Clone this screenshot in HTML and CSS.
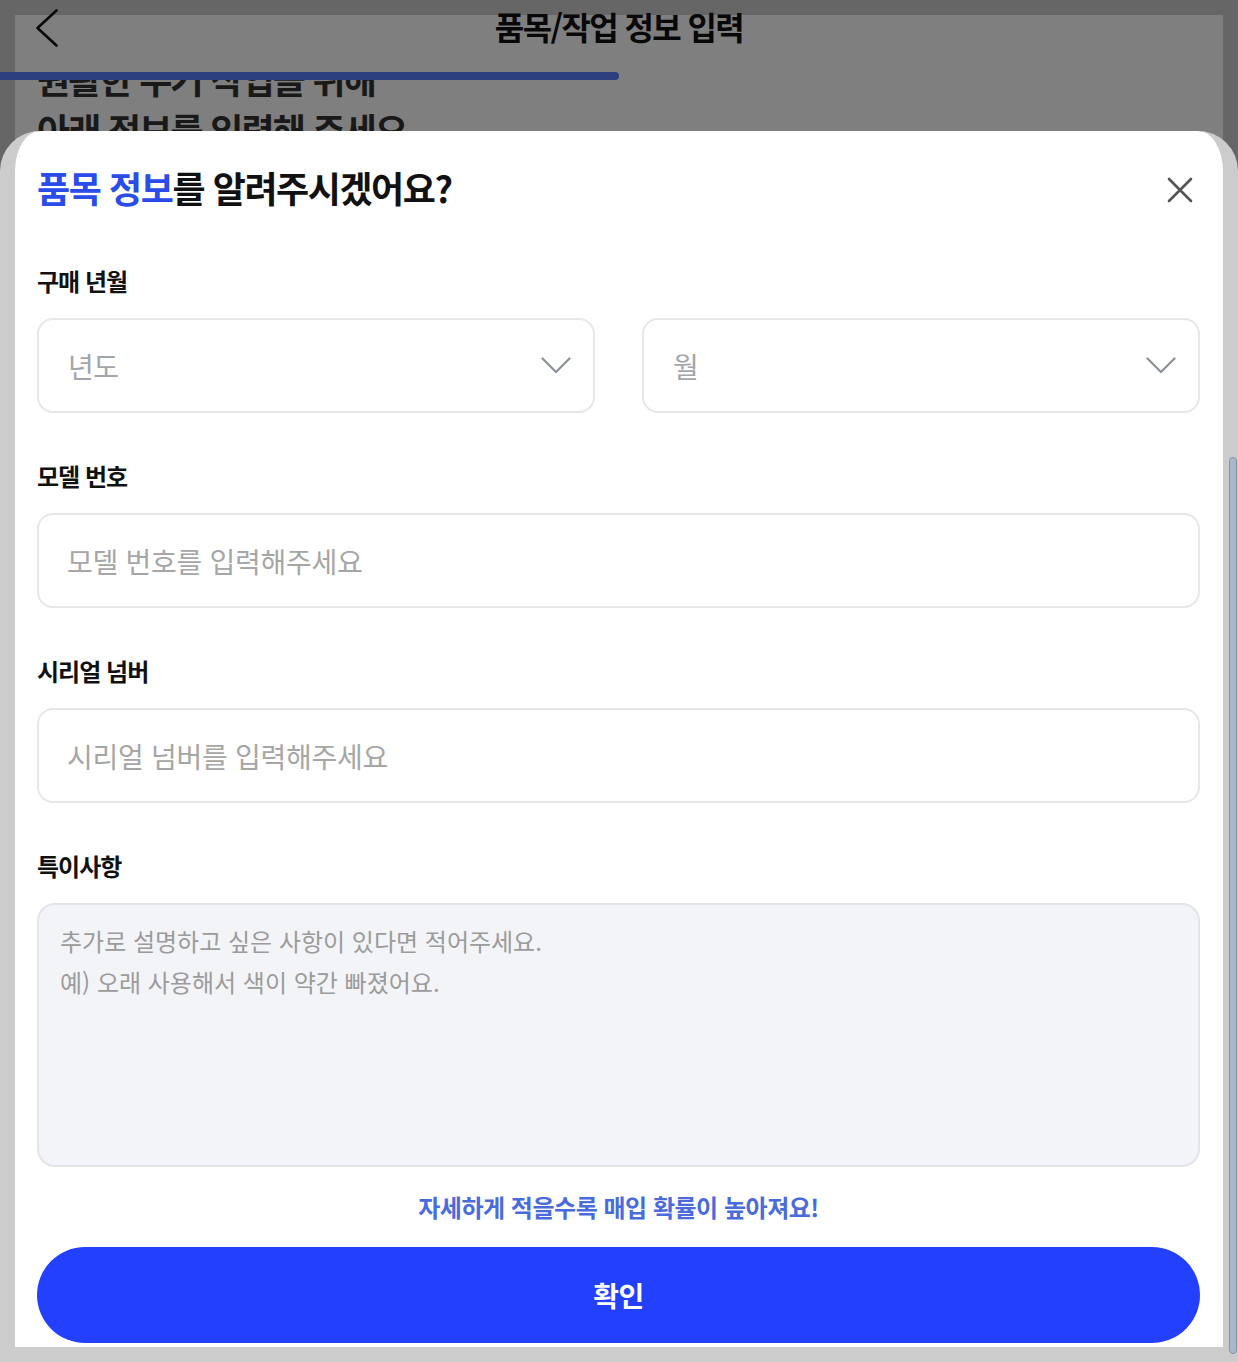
FILE: index.html
```html
<!DOCTYPE html>
<html lang="ko">
<head>
    <meta charset="UTF-8">
    <meta name="viewport" content="width=device-width, initial-scale=1.0">
    <title>품목/작업 정보 입력</title>
    <link rel="stylesheet" href="styles.css">
</head>
<body>

<div class="frame">
    <div class="page">
        <header class="topbar">
            <button class="back" aria-label="뒤로">
                <svg width="26" height="40" viewBox="0 0 26 40"><path d="M22.5 2.5 L3.5 20 L22.5 37.5" fill="none" stroke="#111" stroke-width="2.6" stroke-linecap="round" stroke-linejoin="round"/></svg>
            </button>
            <h1 class="topbar-title">품목/작업 정보 입력</h1>
        </header>
        <div class="progress"><div class="progress-fill" style="width:50%"></div></div>
        <div class="intro">
            <p>원활한 수거 작업을 위해<br>아래 정보를 입력해 주세요</p>
        </div>
    </div>
</div>

<div class="dim"></div>

<div class="sheet">
    <div class="sheet-head">
        <h2 class="sheet-title"><span class="accent">품목 정보</span>를 알려주시겠어요?</h2>
        <button class="close" aria-label="닫기">
            <svg width="26" height="26" viewBox="0 0 26 26"><path d="M2 2 L24 24 M24 2 L2 24" fill="none" stroke="#555" stroke-width="2.6" stroke-linecap="round"/></svg>
        </button>
    </div>

    <div class="field first">
        <label class="field-label">구매 년월</label>
        <div class="select-row">
            <div class="select">
                <span>년도</span>
                <svg width="30" height="17" viewBox="0 0 30 17"><path d="M1.5 1.5 L15 15 L28.5 1.5" fill="none" stroke="#8b9198" stroke-width="2.2" stroke-linecap="round" stroke-linejoin="round"/></svg>
            </div>
            <div class="select">
                <span>월</span>
                <svg width="30" height="17" viewBox="0 0 30 17"><path d="M1.5 1.5 L15 15 L28.5 1.5" fill="none" stroke="#8b9198" stroke-width="2.2" stroke-linecap="round" stroke-linejoin="round"/></svg>
            </div>
        </div>
    </div>

    <div class="field">
        <label class="field-label" for="model">모델 번호</label>
        <input class="text-input" type="text" id="model" placeholder="모델 번호를 입력해주세요">
    </div>

    <div class="field">
        <label class="field-label" for="serial">시리얼 넘버</label>
        <input class="text-input" type="text" id="serial" placeholder="시리얼 넘버를 입력해주세요">
    </div>

    <div class="field">
        <label class="field-label" for="note">특이사항</label>
        <textarea class="note" id="note" placeholder="추가로 설명하고 싶은 사항이 있다면 적어주세요.&#10;예) 오래 사용해서 색이 약간 빠졌어요."></textarea>
    </div>

    <p class="hint">자세하게 적을수록 매입 확률이 높아져요!</p>

    <button class="confirm">확인</button>
</div>

<div class="scrollbar"></div>

</body>
</html>
```

FILE: styles.css
```css
body{
    margin:0;
    padding:0;
    background-color:#cccccc;
    font-family:"Noto Sans CJK KR", "Noto Sans", sans-serif;
    color:#111;
}
button{
    font-family:inherit;
    border:none;
    background:none;
    padding:0;
    cursor:pointer;
}

/* page behind the sheet */
.frame{
    height:100vh;
    padding:15px;
    box-sizing:border-box;
}
.page{
    display:flow-root;
    height:100%;
    background-color:white;
}
.topbar{
    display:grid;
    grid-template-columns:1fr auto 1fr;
    height:72px;
    margin-top:-15px;
}
.back{
    justify-self:start;
    align-self:start;
    margin:8px 0 0 19px;
    line-height:0;
}
.topbar-title{
    margin:6px 0 0;
    font-size:32px;
    line-height:40px;
    font-weight:700;
    letter-spacing:-0.05em;
    color:#111;
}
.progress{
    height:8px;
    margin:0 -15px;
}
.progress-fill{
    height:100%;
    background-color:#5c7eff;
    border-radius:0 4px 4px 0;
}
.intro{
    padding:0 22px;
    height:60px;
    overflow:hidden;
}
.intro p{
    margin:-27px 0 0;
    font-size:36px;
    line-height:51px;
    font-weight:700;
    letter-spacing:-0.05em;
    color:#333;
}
.dim{
    position:fixed;
    inset:0;
    z-index:2;
    background-color:rgba(0, 0, 0, 0.5);
}

/* bottom sheet */
.sheet{
    position:fixed;
    left:0;
    right:0;
    top:131px;
    bottom:0;
    z-index:3;
    box-sizing:border-box;
    padding:34px 23px 0 22px;
    background-color:white;
    border:0 solid #cccccc;
    border-width:0 15px 15px;
    border-radius:40px 40px 0 0;
    overflow:hidden;
}
.sheet-head{
    display:flex;
    justify-content:space-between;
    align-items:center;
}
.sheet-title{
    margin:0;
    font-size:36px;
    line-height:44px;
    font-weight:700;
    letter-spacing:-0.04em;
    color:#111;
}
.accent{
    color:#2a4ce8;
}
.close{
    line-height:0;
    margin:6px 7px 0 0;
}
.field{
    margin-top:47px;
}
.field.first{
    margin-top:56px;
}
.field-label{
    display:block;
    margin-bottom:21px;
    font-size:24px;
    line-height:32px;
    font-weight:600;
    letter-spacing:-0.04em;
    color:#111;
}
.select-row{
    display:grid;
    grid-template-columns:1fr 1fr;
    gap:47px;
}
.select{
    display:flex;
    justify-content:space-between;
    align-items:center;
    height:95px;
    box-sizing:border-box;
    padding:0 22px 0 29px;
    border:2px solid #e7e7e7;
    border-radius:16px;
    font-size:28px;
    letter-spacing:-0.02em;
    color:#a2a6ab;
}
.text-input{
    display:block;
    width:100%;
    height:95px;
    box-sizing:border-box;
    padding:0 28px;
    border:2px solid #e7e7e7;
    border-radius:16px;
    font-family:inherit;
    font-size:28px;
    letter-spacing:-0.01em;
    color:#111;
    outline:none;
}
.text-input::placeholder{
    color:#a6a6a6;
}
.note{
    display:block;
    width:100%;
    height:264px;
    box-sizing:border-box;
    padding:15px 21px;
    background-color:#f3f4f8;
    border:2px solid #e2e4e9;
    border-radius:18px;
    font-family:inherit;
    font-size:24px;
    line-height:41px;
    letter-spacing:0;
    resize:none;
    outline:none;
}
.note::placeholder{
    color:#9b9b9b;
}
.hint{
    margin:24px 0 0;
    text-align:center;
    font-size:24px;
    line-height:32px;
    font-weight:600;
    letter-spacing:-0.02em;
    color:#4a6bdc;
}
.confirm{
    display:block;
    width:100%;
    height:96px;
    margin-top:24px;
    border-radius:48px;
    background-color:#2340ff;
    color:white;
    font-size:28px;
    font-weight:700;
    letter-spacing:-0.02em;
}
.scrollbar{
    position:fixed;
    right:1px;
    top:457px;
    bottom:8px;
    z-index:4;
    width:6px;
    background-color:#a9b9cd;
    border:1px solid #8394aa;
    border-radius:4px;
}
```
